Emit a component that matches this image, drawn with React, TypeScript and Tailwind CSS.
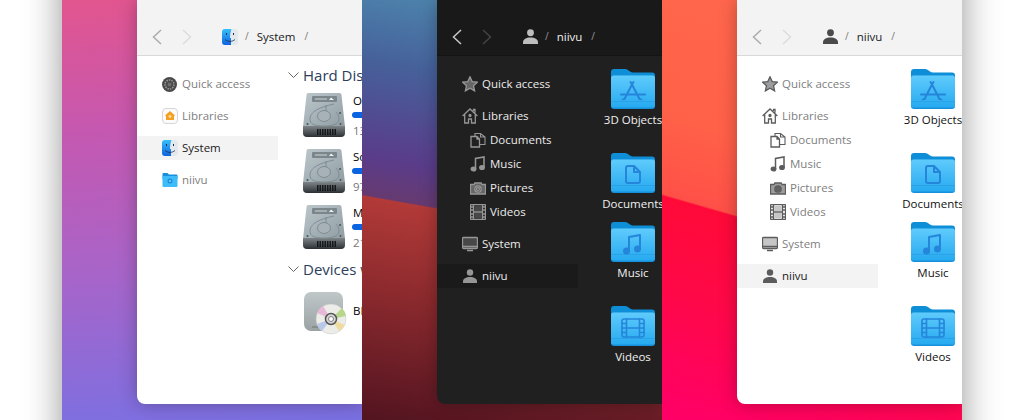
import type { ReactNode } from "react";

type Theme = "light" | "dark";

const Defs = () => (
  <svg className="absolute h-0 w-0">
    <defs>
      <linearGradient id="folderFront" x1="0" y1="0" x2="0" y2="1">
        <stop offset="0" stopColor="#5fcbfc" />
        <stop offset="1" stopColor="#27aaf0" />
      </linearGradient>
      <linearGradient id="diskBody" x1="0" y1="0" x2="1" y2="1">
        <stop offset="0" stopColor="#bcc7cb" />
        <stop offset="1" stopColor="#8f9da3" />
      </linearGradient>
      <linearGradient id="diskBase" x1="0" y1="0" x2="0" y2="1">
        <stop offset="0" stopColor="#7d8487" />
        <stop offset="1" stopColor="#2c3032" />
      </linearGradient>
      <linearGradient id="discBox" x1="0" y1="0" x2="0" y2="1">
        <stop offset="0" stopColor="#c0c7c9" />
        <stop offset="1" stopColor="#9aa2a3" />
      </linearGradient>
      <linearGradient id="finderBlue" x1="0" y1="0" x2="0" y2="1">
        <stop offset="0" stopColor="#35c0fa" />
        <stop offset="1" stopColor="#0f62e0" />
      </linearGradient>
    </defs>
  </svg>
);

const Folder = ({ children }: { children: ReactNode }) => (
  <svg width="44" height="40" viewBox="0 0 44 40" className="shrink-0">
    <path d="M0 3a3 3 0 0 1 3-3h11c2 0 3 1 5 2.500 1 .7 2 1 3 1h19a3 3 0 0 1 3 3V20H0z" fill="#0f8ed8" />
    <path d="M0 9a3 3 0 0 1 3-3h38a3 3 0 0 1 3 3v28a3 3 0 0 1-3 3H3a3 3 0 0 1-3-3z" fill="#1790dc" />
    <path d="M0 9a2.500 2.500 0 0 1 2.500-2.500h39A2.500 2.500 0 0 1 44 9v27.500a2 2 0 0 1-2 2H2a2 2 0 0 1-2-2z" fill="url(#folderFront)" />
    <path d="M0 32.500h44" stroke="#2aa2e8" strokeWidth="1" />
    <g fill="none" stroke="#2585da" strokeWidth="2" strokeLinecap="round" strokeLinejoin="round">
      {children}
    </g>
  </svg>
);

const AppGlyph = () => (
  <>
    <path d="M19.500 13L21 15.500 22.500 13M21 15.500L13.500 30M21 15.500L28.500 30M10 25.500h24" />
    <path d="M13.500 30l-2 .5M28.500 30l2 .5" strokeWidth="1.600" />
  </>
);
const DocGlyph = () => <path d="M15 15a2 2 0 0 1 2-2h6l6 6v9a2 2 0 0 1-2 2H17a2 2 0 0 1-2-2zM23 13v6h6" />;
const MusicGlyph = () => (
  <g>
    <path d="M18 29V15l11-2v14" />
    <circle cx="15.500" cy="29" r="2.500" fill="#2585da" />
    <circle cx="26.500" cy="27" r="2.500" fill="#2585da" />
  </g>
);
const FilmGlyph = () => (
  <g strokeWidth="1.600">
    <rect x="11" y="13" width="22" height="18" rx="2" />
    <path d="M15.500 13v18M28.500 13v18M15.500 22h13M11 17.500h4.500M11 22h4.500M11 26.500h4.500M28.500 17.500H33M28.500 22H33M28.500 26.500H33" />
  </g>
);

const folders = [
  { label: "3D Objects", glyph: <AppGlyph />, rowClass: "h-[84px]" },
  { label: "Documents", glyph: <DocGlyph />, rowClass: "h-[69px]" },
  { label: "Music", glyph: <MusicGlyph />, rowClass: "h-[84px]" },
  { label: "Videos", glyph: <FilmGlyph />, rowClass: "h-[69px]" },
];

const HardDisk = () => (
  <svg width="42" height="44" viewBox="0 0 42 44" className="shrink-0">
    <path d="M3.500 2a2 2 0 0 1 2-2h31a2 2 0 0 1 2 2L42 34H0z" fill="url(#diskBody)" />
    <path d="M0 33h42v7a4 4 0 0 1-4 4H4a4 4 0 0 1-4-4z" fill="url(#diskBase)" />
    <path d="M14 39h20" stroke="#15181a" strokeWidth="6" strokeDasharray="1.500 1" />
    <rect x="9" y="3" width="25" height="6" rx="1" fill="#7b868b" />
    <rect x="12" y="5" width="12" height="2" fill="#a4aeb3" />
    <path d="M28 4.500l3 2.500h-5z" fill="#eef1f2" />
    <path d="M31 11c-9 2-24 6-24 15 0 5 4 7 14 7 9 0 15-2 15-7 0-3-1-5-3-7" fill="none" stroke="#7f8c92" strokeWidth="1" />
    <path d="M23 12v6" stroke="#7f8c92" strokeWidth="1" />
    <ellipse cx="21" cy="23" rx="6.500" ry="5.500" fill="#a6b2b7" stroke="#7f8c92" strokeWidth="1" />
    <circle cx="4.500" cy="31" r="1" fill="#4a5256" />
    <circle cx="37.500" cy="31" r="1" fill="#4a5256" />
    <circle cx="37" cy="20" r="1" fill="#4a5256" />
  </svg>
);

const DiscDrive = () => (
  <svg width="44" height="44" viewBox="0 0 44 44" className="shrink-0">
    <rect x="0" y="0" width="39" height="39" rx="7" fill="url(#discBox)" />
    <path d="M8 35h18" stroke="#6e7677" strokeWidth="1" />
    <circle cx="27" cy="27" r="15" fill="#ecece8" stroke="#c4c4c4" strokeWidth="0.500" />
    <path d="M27 27L13 21a15 15 0 0 1 6-7z" fill="#e8b8d8" />
    <path d="M27 27L42 24a15 15 0 0 0-4-8z" fill="#b9d68e" />
    <path d="M27 27L41 33a15 15 0 0 1-6 6z" fill="#f0dca0" />
    <path d="M27 27L13 32a15 15 0 0 0 5 7z" fill="#b8c8e8" />
    <circle cx="27" cy="27" r="5.500" fill="#d8d8d8" stroke="#555" strokeWidth="1.500" />
    <circle cx="27" cy="27" r="2.500" fill="#fff" stroke="#666" strokeWidth="0.800" />
  </svg>
);

const Finder = () => (
  <svg width="16" height="16" viewBox="0 0 16 16" className="shrink-0">
    <rect width="16" height="16" rx="3" fill="#e3e8ec" />
    <path d="M3 0h6.500C8.500 3 8 5.500 8 9h1v7H3a3 3 0 0 1-3-3V3a3 3 0 0 1 3-3z" fill="url(#finderBlue)" />
    <path d="M4.500 4v2M11.500 4v2" stroke="#1b2b4a" strokeWidth="1" />
    <path d="M3 10.500c3 2.500 7 2.500 10 0" stroke="#1b2b4a" strokeWidth="0.800" fill="none" />
  </svg>
);

const SettingsDot = () => (
  <svg width="15" height="15" viewBox="0 0 15 15" className="shrink-0">
    <circle cx="7.500" cy="7.500" r="7.500" fill="#4a4a4a" />
    <circle cx="7.500" cy="7.500" r="4.500" fill="none" stroke="#9a9a9a" strokeWidth="1.500" strokeDasharray="1.500 1" />
    <circle cx="7.500" cy="7.500" r="2" fill="#6e6e6e" />
  </svg>
);

const OrangeHome = () => (
  <svg width="16" height="16" viewBox="0 0 16 16" className="shrink-0">
    <rect x="0.500" y="0.500" width="15" height="15" rx="3.500" fill="#fbfbfb" stroke="#d6d6d6" />
    <path d="M8 3l5 4.500-1 .6V12H4V8.100l-1-.6z" fill="#f5a020" />
    <circle cx="8" cy="8.500" r="1.400" fill="#fde0a0" />
  </svg>
);

const SmallFolder = () => (
  <svg width="16" height="14" viewBox="0 0 15 14" className="shrink-0">
    <path d="M0 1a1 1 0 0 1 1-1h4l1.500 1.500H14a1 1 0 0 1 1 1V6H0z" fill="#1790dc" />
    <path d="M0 3h15v10a1 1 0 0 1-1 1H1a1 1 0 0 1-1-1z" fill="#3dbcf8" />
    <circle cx="7.500" cy="8" r="2.500" fill="#1c8ddc" />
    <circle cx="7.500" cy="8" r="1" fill="#8ad8fc" />
  </svg>
);

const Glyph = ({ children }: { children: ReactNode }) => (
  <svg width="16" height="16" viewBox="0 0 16 16" className="shrink-0" fill="none" stroke="currentColor" strokeWidth="1.300">
    {children}
  </svg>
);

const StarIcon = () => (
  <Glyph>
    <path d="M8 .8l2.200 4.800 5.200.6-3.900 3.500 1.100 5.200L8 12.300l-4.600 2.600 1.100-5.200L.6 6.200l5.200-.6z" fill="currentColor" fillOpacity="0.6" />
  </Glyph>
);
const HomeIcon = () => (
  <Glyph>
    <path d="M.6 8L8 1l7.400 7M2.700 6.500V15h3.800v-4h3v4h3.800V6.500M11.500 3V1.500h1.500v3.200" />
    <circle cx="8" cy="7.500" r="1" fill="currentColor" />
  </Glyph>
);
const DocsIcon = () => (
  <Glyph>
    <path d="M1 4.500h6l2.500 2.500v8H1zM7 4.500V7h2.500" />
    <path d="M5 4.500V1.500h5.500L15 5v7.500H9.500M10.500 1.500V5H15" strokeWidth="1.100" />
  </Glyph>
);
const MusicIcon = () => (
  <Glyph>
    <path d="M5.500 13V2.500L14 1v10" strokeWidth="1.500" />
    <ellipse cx="3.500" cy="13" rx="2.300" ry="1.900" fill="currentColor" />
    <ellipse cx="12" cy="11.500" rx="2.300" ry="1.900" fill="currentColor" />
  </Glyph>
);
const CameraIcon = () => (
  <Glyph>
    <path d="M.5 4.500h3.500l.8-1.500h6.400l.8 1.500h3.500v9.500H.5z" fill="currentColor" fillOpacity="0.6" />
    <circle cx="8" cy="9" r="3.200" fill="#00000040" />
    <circle cx="8" cy="9" r="1.500" />
  </Glyph>
);
const FilmIcon = () => (
  <Glyph>
    <rect x="0.500" y="0.500" width="15" height="15" rx="1" />
    <path d="M3.500.5v15M12.500.5v15M3.500 8h9" />
    <path d="M1 3h2M1 6h2M1 10h2M1 13h2M13 3h2M13 6h2M13 10h2M13 13h2" strokeWidth="1.400" />
    <rect x="4.500" y="2" width="7" height="5" fill="currentColor" fillOpacity="0.35" stroke="none" />
    <rect x="4.500" y="9" width="7" height="5" fill="currentColor" fillOpacity="0.35" stroke="none" />
  </Glyph>
);
const MonitorIcon = () => (
  <Glyph>
    <rect x="0.500" y="1.500" width="15" height="11" rx="1" fill="currentColor" fillOpacity="0.35" />
    <path d="M.5 10.500h15M5 14.500h6" strokeWidth="1.500" />
  </Glyph>
);
const UserIcon = ({ size = 14 }: { size?: number }) => (
  <svg width={size} height={size} viewBox="0 0 14 14" className="shrink-0" fill="currentColor">
    <circle cx="7" cy="3.500" r="3.200" />
    <path d="M0 14v-1.500C0 9.500 3 8 7 8s7 1.500 7 4.500V14z" />
  </svg>
);

const Chevron = ({ left, className }: { left?: boolean; className: string }) => (
  <svg width="10" height="16" viewBox="0 0 10 16" className={className} fill="none" stroke="currentColor" strokeWidth="1.500">
    <path d={left ? "M9 1L1.500 8 9 15" : "M1 1l7.500 7L1 15"} />
  </svg>
);

const Breadcrumb = ({ theme, icon, label }: { theme: Theme; icon: ReactNode; label: string }) => {
  const dark = theme === "dark";
  return (
    <div className={`flex h-14 shrink-0 items-center border-b pt-[18px] ${dark ? "border-[#141414] bg-[#191919]" : "border-[#d9d9d9] bg-[#f3f3f3]"}`}>
      <Chevron left className={`ml-[15px] ${dark ? "text-[#c8c8c8]" : "text-[#acacac]"}`} />
      <Chevron className={`ml-5 ${dark ? "text-[#444444]" : "text-[#dcdcdc]"}`} />
      <div className={`ml-[30px] flex w-4 justify-center ${dark ? "text-[#bdbdbd]" : "text-[#4a4a4a]"}`}>{icon}</div>
      <span className={`ml-[7px] text-[10px] ${dark ? "text-[#999999]" : "text-[#777777]"}`}>/</span>
      <span className={`ml-2 text-[11.5px] ${dark ? "text-[#f0f0f0]" : "text-[#1a1a1a]"}`}>{label}</span>
      <span className={`ml-[9px] text-[10px] ${dark ? "text-[#999999]" : "text-[#777777]"}`}>/</span>
    </div>
  );
};

type NavItem = { icon: ReactNode; label: string; sub?: boolean; gap?: boolean; selected?: boolean };

const Sidebar = ({ theme, items }: { theme: Theme; items: NavItem[] }) => {
  const dark = theme === "dark";
  return (
    <div className="flex w-[141px] shrink-0 flex-col pt-4">
      {items.map((item) => (
        <div
          key={item.label}
          className={`flex h-6 items-center ${item.sub ? "pl-[33px]" : "pl-[25px]"} ${item.gap ? "mt-2" : ""} ${
            item.selected ? (dark ? "bg-[#1a1a1a]" : "bg-[#f3f3f3]") : ""
          } ${dark ? "text-[#969696]" : "text-[#5c5c5c]"}`}
        >
          <div className="flex w-[20px] shrink-0">{item.icon}</div>
          <span
            className={`text-[11.5px] ${
              dark ? "text-[#ececec]" : item.selected ? "text-[#1a1a1a]" : "text-[#808080]"
            }`}
          >
            {item.label}
          </span>
        </div>
      ))}
    </div>
  );
};

const folderNav = (): NavItem[] => [
  { icon: <StarIcon />, label: "Quick access" },
  { icon: <HomeIcon />, label: "Libraries", gap: true },
  { icon: <DocsIcon />, label: "Documents", sub: true },
  { icon: <MusicIcon />, label: "Music", sub: true },
  { icon: <CameraIcon />, label: "Pictures", sub: true },
  { icon: <FilmIcon />, label: "Videos", sub: true },
  { icon: <MonitorIcon />, label: "System", gap: true },
  { icon: <div className="flex w-4 justify-center"><UserIcon /></div>, label: "niivu", gap: true, selected: true },
];

const FolderGrid = ({ theme }: { theme: Theme }) => (
  <div className="flex w-[110px] shrink-0 flex-col pt-[13px] pl-[7px]">
    {folders.map((f) => (
      <div key={f.label} className={`flex w-[96px] flex-col items-center ${f.rowClass}`}>
        <Folder>{f.glyph}</Folder>
        <span className={`mt-[2px] whitespace-nowrap text-[11.5px] ${theme === "dark" ? "text-[#f0f0f0]" : "text-[#111111]"}`}>{f.label}</span>
      </div>
    ))}
  </div>
);

const drives = [
  { name: "OS (C:)", size: "13.5 GB free of 118 GB" },
  { name: "Software (D:)", size: "97.2 GB free of 465 GB" },
  { name: "Media (E:)", size: "21.8 GB free of 931 GB" },
];

const GroupTitle = ({ title }: { title: string }) => (
  <div className="flex h-6 items-center whitespace-nowrap text-[15px] text-[#2c3e5a]">
    <svg width="11" height="7" viewBox="0 0 11 7" className="mr-[4px] shrink-0 text-[#666666]" fill="none" stroke="currentColor">
      <path d="M.5 .5l5 5 5-5" />
    </svg>
    {title}
  </div>
);

const DriveList = () => (
  <div className="flex w-[300px] shrink-0 flex-col pt-[7px] pl-[10px]">
    <GroupTitle title="Hard Disk Drives (3)" />
    <div className="flex flex-col gap-[12px] pl-[15px] pt-[6px]">
      {drives.map((d) => (
        <div key={d.name} className="flex h-11 items-start gap-2">
          <HardDisk />
          <div className="flex w-[190px] flex-col">
            <span className="text-[11.5px] leading-[16px] text-black">{d.name}</span>
            <div className="mt-[3px] -ml-[1px] h-[6px] rounded-full bg-[#0a63e0]" />
            <span className="mt-[5px] text-[11.5px] leading-[16px] text-[#777777]">{d.size}</span>
          </div>
        </div>
      ))}
    </div>
    <div className="mt-[8px]">
      <GroupTitle title="Devices with Removable Storage (1)" />
    </div>
    <div className="flex items-center gap-[6px] pl-[16px] pt-[11px]">
      <DiscDrive />
      <span className="-mt-[6px] -ml-[1px] text-[11.5px] text-black">BD-ROM Drive (F:)</span>
    </div>
  </div>
);

const Panel = ({ wallpaper, theme, crumb, children }: { wallpaper: string; theme: Theme; crumb: ReactNode; children: ReactNode }) => (
  <div className={`h-[420px] w-[300px] shrink-0 overflow-hidden pl-[75px] ${wallpaper}`}>
    <div
      className={`flex h-[404px] w-[225px] flex-col overflow-hidden rounded-bl-lg shadow-[0_0_18px_rgba(0,0,0,0.28)] ${
        theme === "dark" ? "bg-[#202020]" : "bg-white"
      }`}
    >
      {crumb}
      <div className="flex min-h-0 flex-1">{children}</div>
    </div>
  </div>
);

export default function App() {
  return (
    <div className="flex h-[420px] w-[1024px] justify-center overflow-hidden bg-white font-['Open_Sans',sans-serif]">
      <Defs />
      <div className="-mt-10 flex h-[500px] w-[900px] shrink-0 items-start pt-10 shadow-[0_0_34px_rgba(0,0,0,0.42)]">
        <Panel
          theme="light"
          wallpaper="bg-[linear-gradient(176deg,#e2558e_0%,#c558b0_30%,#a864c8_62%,#7a70e2_100%)]"
          crumb={<Breadcrumb theme="light" icon={<Finder />} label="System" />}
        >
          <Sidebar
            theme="light"
            items={[
              { icon: <SettingsDot />, label: "Quick access" },
              { icon: <OrangeHome />, label: "Libraries", gap: true },
              { icon: <Finder />, label: "System", gap: true, selected: true },
              { icon: <SmallFolder />, label: "niivu", gap: true },
            ]}
          />
          <DriveList />
        </Panel>
        <Panel
          theme="dark"
          wallpaper="bg-[linear-gradient(190deg,#5095b5_0%,#46609a_24%,#5a3c8a_44%,#663a70_52.300%,#b23a38_52.600%,#8c2a2e_72%,#521420_100%)]"
          crumb={<Breadcrumb theme="dark" icon={<UserIcon size={15} />} label="niivu" />}
        >
          <Sidebar theme="dark" items={folderNav()} />
          <FolderGrid theme="dark" />
        </Panel>
        <Panel
          theme="light"
          wallpaper="bg-[linear-gradient(196deg,#ff6a4e_0%,#ff6048_40%,#ff5048_55.300%,#ff0a38_55.700%,#ff0848_74%,#ff0068_100%)]"
          crumb={<Breadcrumb theme="light" icon={<UserIcon size={15} />} label="niivu" />}
        >
          <Sidebar theme="light" items={folderNav()} />
          <FolderGrid theme="light" />
        </Panel>
      </div>
    </div>
  );
}
